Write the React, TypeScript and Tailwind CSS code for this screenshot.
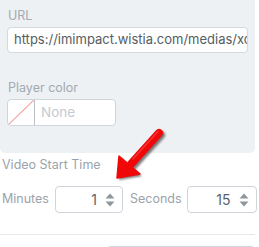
import React from 'react';

function Spinner() {
  return (
    <svg width="10" height="14" viewBox="0 0 10 14" className="shrink-0">
      <path d="M0.5 5.5 L5 0.5 L9.5 5.5 Z" fill="#8e979f" />
      <path d="M0.5 8.5 L5 13.5 L9.5 8.5 Z" fill="#8e979f" />
    </svg>
  );
}

function NumberBox({ value, width }: { value: string; width: string }) {
  return (
    <div
      className={`${width} h-[27px] shrink-0 flex items-center justify-end gap-[8px] pr-[7px] bg-white border border-[#cfd5da] rounded-[4px]`}
    >
      <span className="text-[14px] text-[#5b636a] leading-none">{value}</span>
      <Spinner />
    </div>
  );
}

function Arrow() {
  return (
    <svg
      width="80"
      height="70"
      viewBox="0 0 80 70"
      className="absolute left-[100px] top-[120px] pointer-events-none"
    >
      <defs>
        <filter id="sh" x="-30%" y="-30%" width="160%" height="160%">
          <feGaussianBlur stdDeviation="1.2" />
        </filter>
      </defs>
      <g transform="translate(2,2)" opacity="0.6" filter="url(#sh)">
        <line x1="59" y1="13" x2="31" y2="44" stroke="#222" strokeWidth="8" strokeLinecap="round" />
        <polygon points="19,36 17,58 40,54" fill="#222" />
      </g>
      <line x1="59" y1="13" x2="31" y2="44" stroke="#f00808" strokeWidth="8" strokeLinecap="round" />
      <polygon points="19,36 17,58 40,54" fill="#f00808" strokeLinejoin="round" stroke="#f00808" strokeWidth="1.5" />
      <line x1="58" y1="11.5" x2="33" y2="39" stroke="#ff6060" strokeWidth="1.5" strokeLinecap="round" opacity="0.5" />
    </svg>
  );
}

export default function App() {
  return (
    <div className="relative w-[259px] h-[247px] overflow-hidden bg-white font-['Inter',sans-serif]">
      <div className="w-[255px] bg-[#eef1f3] rounded-b-[5px] pt-[8px] px-[7px] pb-[27px]">
        <div className="pl-[1px] text-[12.5px] leading-[16px] text-[#a2aab2]">URL</div>
        <div className="mt-[3px] h-[26px] flex items-center overflow-hidden bg-white border border-[#d3d9de] rounded-[4px] pl-[6px]">
          <span className="whitespace-nowrap text-[13px] text-[#555c63]">
            https://imimpact.wistia.com/medias/xcfq2m8u1v
          </span>
        </div>
        <div className="mt-[27px] pl-[1px] text-[12.5px] leading-[16px] text-[#a2aab2]">Player color</div>
        <div className="mt-[3px] w-[109px] h-[27px] flex bg-white border border-[#cfd5da] rounded-[4px] overflow-hidden">
          <div className="w-[27px] h-full border-r border-[#b9c1c8] shrink-0">
            <svg width="26" height="25" viewBox="0 0 26 25">
              <line x1="0" y1="25" x2="26" y2="0" stroke="#f7a3a3" strokeWidth="1.2" />
            </svg>
          </div>
          <div className="flex items-center pl-[6px] text-[13.5px] text-[#c4cad0]">None</div>
        </div>
      </div>

      <div className="px-[2px]">
        <div className="mt-[4px] text-[12.5px] leading-[16px] text-[#9ba3ab]">Video Start Time</div>
        <div className="mt-[13px] flex items-center">
          <span className="text-[12.5px] text-[#9ba3ab]">Minutes</span>
          <div className="ml-[6px]">
            <NumberBox value="1" width="w-[68px]" />
          </div>
          <span className="ml-[7px] text-[12.5px] text-[#9ba3ab]">Seconds</span>
          <div className="ml-[5px]">
            <NumberBox value="15" width="w-[70px]" />
          </div>
        </div>
      </div>

      <div className="mt-[21px] w-[255px] border-t border-[#e6e9ec]" />
      <div className="mt-[11px] ml-[107px] w-[148px] h-[12px] border border-[#cfd5da] rounded-t-[4px]" />

      <Arrow />
    </div>
  );
}
